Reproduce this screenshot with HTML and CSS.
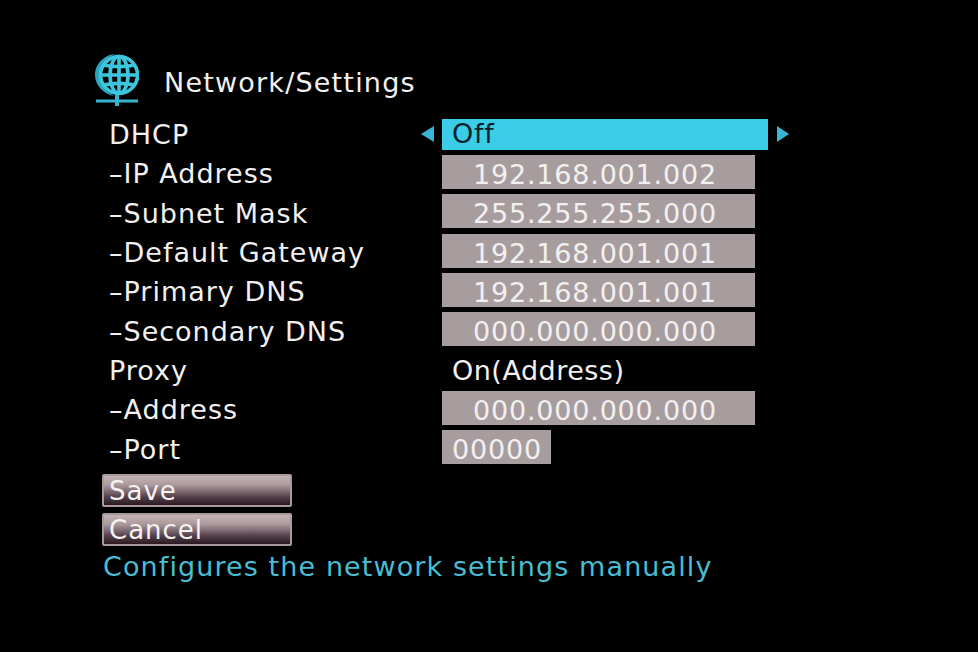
FILE: index.html
```html
<!DOCTYPE html>
<html lang="en">

<head>
    <meta charset="UTF-8">
    <title>Network/Settings</title>
    <link rel="stylesheet" href="styles.css">
</head>

<body>
    <div class="screen">
        <div class="title">
            <svg class="globe" viewBox="0 0 44 54" width="44" height="54">
                <path d="M20 1C9 2 0 11 0 22c0 10 8 19 19 21C10 38 5 31 5 22 5 13 11 5 20 1z" fill="#2aa5bd" />
                <g fill="none" stroke="#3cc6dd" stroke-width="3.6">
                    <circle cx="24" cy="22" r="18.5" />
                    <ellipse cx="24" cy="22" rx="9" ry="18.5" />
                    <path d="M24 3v38" />
                    <path d="M8 12c10 2 22 2 32 0M6 22h36M8 32c10-2 22-2 32 0" />
                </g>
                <path d="M1 48h42" stroke="#38b4cf" stroke-width="3" />
                <path d="M22 42v11" stroke="#38b4cf" stroke-width="4" />
            </svg>
            <span>Network/Settings</span>
        </div>

        <div class="row select">
            <span class="label">DHCP</span>
            <span class="arrow left"></span>
            <span class="value on">Off</span>
            <span class="arrow right"></span>
        </div>
        <div class="row"><span class="label">–IP Address</span><span class="value ip">192.168.001.002</span></div>
        <div class="row"><span class="label">–Subnet Mask</span><span class="value ip">255.255.255.000</span></div>
        <div class="row"><span class="label">–Default Gateway</span><span class="value ip">192.168.001.001</span></div>
        <div class="row"><span class="label">–Primary DNS</span><span class="value ip">192.168.001.001</span></div>
        <div class="row"><span class="label">–Secondary DNS</span><span class="value ip">000.000.000.000</span></div>
        <div class="row"><span class="label">Proxy</span><span class="value plain">On(Address)</span></div>
        <div class="row"><span class="label">–Address</span><span class="value ip">000.000.000.000</span></div>
        <div class="row"><span class="label">–Port</span><span class="value port">00000</span></div>

        <div class="buttons">
            <button class="btn">Save</button>
            <button class="btn">Cancel</button>
        </div>
        <p class="help">Configures the network settings manually</p>
    </div>
</body>

</html>
```

FILE: styles.css
```css
body {
    margin: 0;
    background-color: #000;
    font-family: "DejaVu Sans", sans-serif;
    color: #f2f0f0;
}

.screen {
    width: 978px;
    height: 652px;
    padding: 53px 0 0 95px;
    box-sizing: border-box;
    overflow: hidden;
}

.title {
    display: flex;
    align-items: flex-start;
    height: 60px;
    font-size: 27px;
    letter-spacing: 1.2px;
}

.title span {
    margin: 14px 0 0 25px;
    line-height: 32px;
}

.row {
    display: flex;
    align-items: center;
    height: 39.3px;
    margin-left: 14px;
    font-size: 27px;
    letter-spacing: 1px;
}

.label {
    width: 333px;
    flex: none;
    padding-top: 4px;
}

.select .label {
    width: 312px;
}

.value {
    box-sizing: border-box;
    height: 34px;
    line-height: 40px;
    padding-left: 10px;
    white-space: nowrap;
    letter-spacing: 0.8px;
}

.on {
    width: 326px;
    height: 31px;
    margin-top: 4px;
    line-height: 30px;
    background-color: #3bcde8;
    color: #06222c;
}

.plain {
    letter-spacing: 0.5px;
}

.ip {
    width: 313px;
    padding-left: 31px;
    background-color: #a79d9f;
}

.port {
    width: 109px;
    background-color: #a79d9f;
}

.arrow {
    flex: none;
    width: 0;
    height: 0;
    margin-top: 2px;
    border-top: 8px solid transparent;
    border-bottom: 8px solid transparent;
}

.arrow.left {
    margin-right: 8px;
    border-right: 13px solid #3ab5d6;
}

.arrow.right {
    margin-left: 9px;
    border-left: 12px solid #3ab5d6;
}

.buttons {
    display: flex;
    flex-direction: column;
    gap: 6px;
    margin: 7.6px 0 0 7px;
}

.btn {
    width: 190px;
    height: 33px;
    padding: 0 0 0 5px;
    text-align: left;
    font-family: inherit;
    font-size: 26px;
    letter-spacing: 1px;
    line-height: 30px;
    color: #f5f2f2;
    border: 2px solid #a89a9c;
    border-radius: 2px;
    background: linear-gradient(#c4b4b6 0%, #ad9b9d 30%, #84727a 50%, #54404a 72%, #2a1a20 100%);
}

.help {
    margin: 3px 0 0 8px;
    font-size: 27px;
    line-height: 36px;
    letter-spacing: 1.1px;
    color: #48bdd3;
    white-space: nowrap;
}
```
